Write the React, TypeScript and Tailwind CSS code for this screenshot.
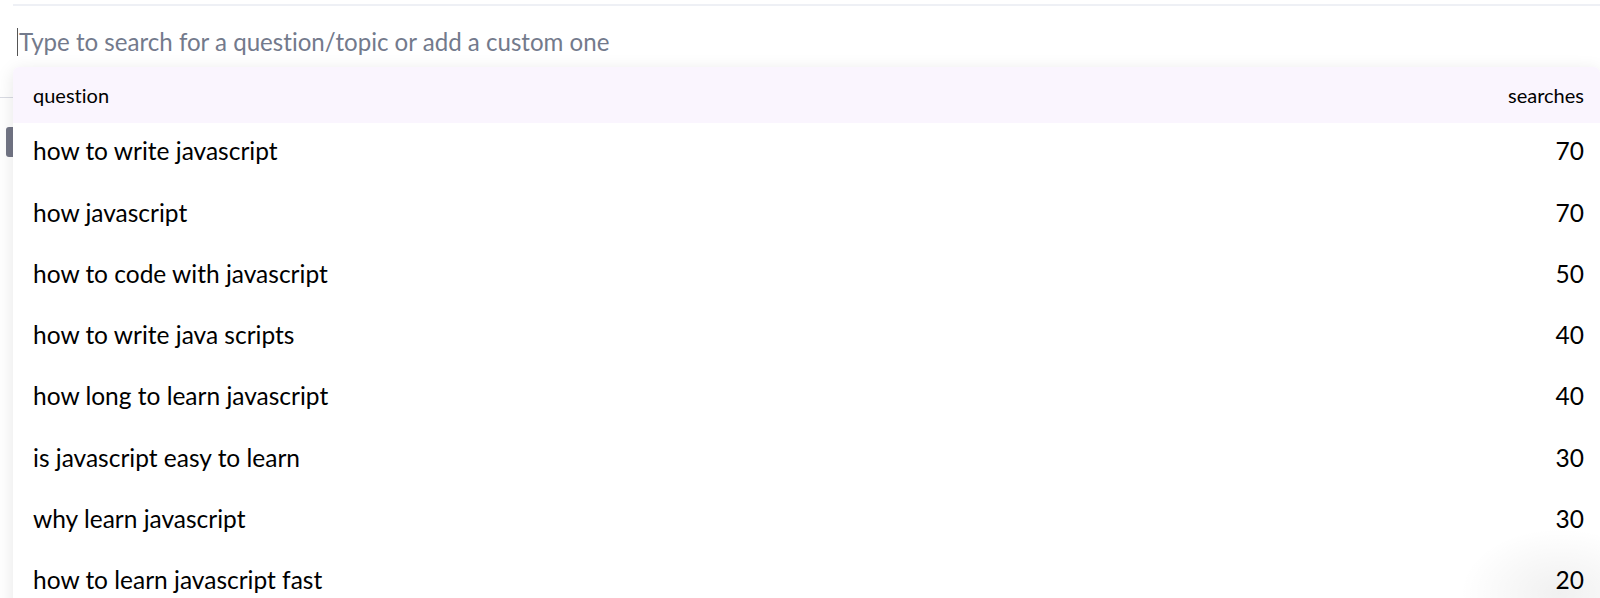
import React from "react";

const rows: [string, number][] = [
  ["how to write javascript", 70],
  ["how javascript", 70],
  ["how to code with javascript", 50],
  ["how to write java scripts", 40],
  ["how long to learn javascript", 40],
  ["is javascript easy to learn", 30],
  ["why learn javascript", 30],
  ["how to learn javascript fast", 20],
  ["how to learn javascript", 20],
];

export default function App() {
  return (
    <div
      className="relative h-[598px] w-full overflow-hidden bg-white text-black [font-variant-ligatures:none]"
      style={{ fontFamily: "Lato, 'Noto Sans', sans-serif" }}
    >
      {/* page underneath */}
      <div className="flex flex-col">
        <div className="ml-[13px] mt-[4px] h-[2px] bg-[#eef0f5]" />
        <div className="mt-[21px] flex h-[30px] items-center pl-[17px]">
          <div className="h-[28px] w-[1px] bg-[#555]" />
          <span className="pl-[1px] text-[24.1px] leading-none text-[#737a8c]">
            Type to search for a question/topic or add a custom one
          </span>
        </div>
        <div className="mt-[40px] h-[1px] bg-[#d9dbe3]" />
        <div className="pl-[6px] pt-[29px]">
          <div className="h-[30px] w-[14px] rounded-[3px] bg-[#737686]" />
        </div>
      </div>

      {/* dropdown */}
      <div className="absolute left-[13px] right-0 top-[67px] bottom-[-40px] rounded-[6px] bg-white shadow-[0_4px_18px_rgba(0,0,0,0.10)]">
        <div className="flex h-[56px] items-center justify-between rounded-t-[6px] bg-[#faf5fe] pl-[20px] pr-[16px] text-[20px] leading-none">
          <span>question</span>
          <span>searches</span>
        </div>
        {rows.map(([q, n], i) => (
          <div
            key={i}
            className="flex h-[61.25px] items-center justify-between pb-[4px] pl-[20px] pr-[16px] text-[24.5px] leading-none"
          >
            <span>{q}</span>
            <span>{n}</span>
          </div>
        ))}
      </div>
      <div className="pointer-events-none absolute bottom-[-60px] right-[-60px] h-[130px] w-[200px] rounded-full bg-[radial-gradient(closest-side,rgba(0,0,0,0.06),rgba(0,0,0,0))]" />
    </div>
  );
}
